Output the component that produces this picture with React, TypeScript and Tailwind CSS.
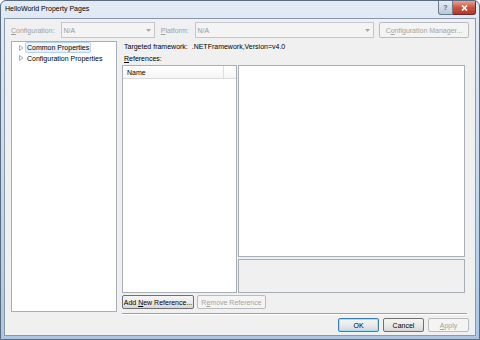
import type { ReactNode } from "react";

const font = "font-['Liberation_Sans',Arial,sans-serif]";

function U({ children }: { children: ReactNode }) {
  return <span className="underline underline-offset-[1px]">{children}</span>;
}

function Combo({ width }: { width: string }) {
  return (
    <div
      className={`${width} flex h-[16px] items-center justify-between border border-[#c4c6c9] bg-[#f4f4f4] pl-[2px] pr-[3px] text-[#9a9a9a]`}
    >
      <span>N/A</span>
      <svg width="5" height="3" viewBox="0 0 5 3">
        <path d="M0 0 L5 0 L2.5 3 Z" fill="#a8a8a8" />
      </svg>
    </div>
  );
}

function Button({
  children,
  width,
  disabled,
  primary,
}: {
  children: ReactNode;
  width: string;
  disabled?: boolean;
  primary?: boolean;
}) {
  if (disabled) {
    return (
      <div
        className={`${width} flex h-[14px] items-center justify-center rounded-[2px] border border-[#b9bcbf] bg-[#f4f4f4] text-[#a3a3a3]`}
      >
        <span>{children}</span>
      </div>
    );
  }
  return (
    <div
      className={`${width} flex h-[14px] items-center justify-center rounded-[2px] border ${
        primary
          ? "border-[#3c7fb1] shadow-[inset_0_0_0_1px_#9fe0f8]"
          : "border-[#707070]"
      } bg-gradient-to-b from-[#f4f4f4] via-[#ebebeb] to-[#d6d6d6] text-black`}
    >
      <span>{children}</span>
    </div>
  );
}

function Expander() {
  return (
    <svg width="5" height="6" viewBox="0 0 5 6" className="shrink-0">
      <path d="M0.5 0.5 L4 3 L0.5 5.5 Z" fill="none" stroke="#9a9a9a" strokeWidth="0.8" />
    </svg>
  );
}

export default function App() {
  return (
    <div
      className={`${font} flex h-[340px] w-[480px] flex-col overflow-hidden rounded-t-[6px] border border-[#5a6b7d] bg-gradient-to-b from-[#e3ebf4] via-[#c8daed] to-[#abc6e4] text-[7px] leading-none text-black`}
    >
      {/* title bar */}
      <div className="flex h-[17px] shrink-0 items-start justify-between">
        <div className="pl-[4px] pt-[4px] text-[7px] text-black">HelloWorld Property Pages</div>
        <div className="mr-[3px] flex">
          <div className="flex h-[14px] w-[15px] items-center justify-center rounded-bl-[3px] border border-t-0 border-[#6d7b8c] bg-gradient-to-b from-[#e6eef6] to-[#b8c8da] text-[7px] font-bold text-[#5a6a7c]">
            ?
          </div>
          <div className="flex h-[14px] w-[23px] items-center justify-center rounded-br-[3px] border border-l-0 border-t-0 border-[#6b2a2a] bg-gradient-to-b from-[#e6a597] via-[#c9553f] to-[#b7382a]">
            <svg width="7" height="6" viewBox="0 0 7 6">
              <path d="M1 0.5 L6 5.5 M6 0.5 L1 5.5" stroke="white" strokeWidth="1.6" />
            </svg>
          </div>
        </div>
      </div>

      {/* dialog body */}
      <div className="mx-[3px] mb-[3px] flex flex-1 flex-col border border-[#8799ad] bg-[#f0f0f0] px-[6px] pt-[3px]">
        {/* configuration row */}
        <div className="flex h-[16px] items-center">
          <div className="w-[50px] text-[#a0a0a0]">
            <U>C</U>onfiguration:
          </div>
          <Combo width="w-[95px]" />
          <div className="ml-[6px] w-[34px] text-[#a0a0a0]">
            <U>P</U>latform:
          </div>
          <Combo width="w-[181px]" />
          <div className="ml-[5px]">
            <div className="flex h-[16px] w-[90px] items-center justify-center rounded-[2px] border border-[#b9bcbf] bg-[#f4f4f4] text-[#a3a3a3]">
              <span>
                C<U>o</U>nfiguration Manager...
              </span>
            </div>
          </div>
        </div>

        <div className="mt-[3px] flex">
          {/* tree */}
          <div className="h-[271px] w-[106px] shrink-0 border border-[#a7aeb6] bg-white pl-[7px]">
            <div className="flex h-[11px] items-center gap-[1px]">
              <Expander />
              <div className="flex h-[11px] items-center rounded-[2px] border border-[#b4d3f7] bg-gradient-to-b from-[#f2f8fe] to-[#e3eefb] px-[1px]">
                Common Properties
              </div>
            </div>
            <div className="flex h-[10px] items-center gap-[1px]">
              <Expander />
              <div className="px-[2px]">Configuration Properties</div>
            </div>
          </div>

          {/* right column */}
          <div className="ml-[5px] flex flex-1 flex-col">
            <div className="mt-[2px] h-[9px] pl-[2px]">
              Targeted framework:&nbsp;&nbsp;.NETFramework,Version=v4.0
            </div>
            <div className="mt-[3px] h-[10px] pl-[2px]">
              <U>R</U>eferences:
            </div>
            <div className="flex h-[228px] gap-[1px]">
              <div className="w-[115px] border border-[#a7aeb6] bg-white">
                <div className="flex h-[13px] border-b border-[#dcdcdc] bg-gradient-to-b from-white to-[#f5f5f5]">
                  <div className="flex w-[101px] items-center border-r border-[#dcdcdc] pl-[4px]">Name</div>
                </div>
              </div>
              <div className="flex flex-1 flex-col gap-[2px] pr-[4px]">
                <div className="flex-1 border border-[#a7aeb6] bg-white" />
                <div className="h-[34px] border border-[#a7aeb6] bg-[#f0f0f0]" />
              </div>
            </div>
            <div className="mt-[2px] flex gap-[3px]">
              <Button width="w-[72px]">
                Add <U>N</U>ew Reference...
              </Button>
              <Button width="w-[69px]" disabled>
                R<U>e</U>move Reference
              </Button>
            </div>
            <div className="mr-[2px] mt-[4px] border-t border-[#a0a0a0] border-b-white border-b" />
          </div>
        </div>

        {/* dialog buttons */}
        <div className="mt-[3px] flex justify-end gap-[4px]">
          <Button width="w-[41px]" primary>
            OK
          </Button>
          <Button width="w-[41px]">Cancel</Button>
          <Button width="w-[41px]" disabled>
            <U>A</U>pply
          </Button>
        </div>
      </div>
    </div>
  );
}
